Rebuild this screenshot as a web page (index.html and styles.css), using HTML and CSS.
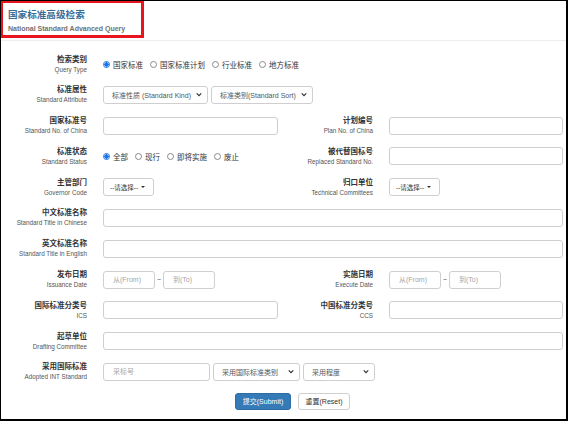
FILE: index.html
```html
<!DOCTYPE html>
<html lang="zh">
<head>
<meta charset="utf-8">
<title>国家标准高级检索</title>
<link rel="stylesheet" href="styles.css">
</head>
<body>
<div class="frame">
  <header class="head">
    <div class="title-box">
      <div class="title">国家标准高级检索</div>
      <div class="subtitle">National Standard Advanced Query</div>
    </div>
  </header>

  <form class="form">
    <div class="label"><b>检索类别</b><span>Query Type</span></div>
    <div class="field span3 radios">
      <label class="opt"><i class="radio on"></i>国家标准</label>
      <label class="opt"><i class="radio"></i>国家标准计划</label>
      <label class="opt"><i class="radio"></i>行业标准</label>
      <label class="opt"><i class="radio"></i>地方标准</label>
    </div>

    <div class="label"><b>标准属性</b><span>Standard Attribute</span></div>
    <div class="field span3 inline">
      <div class="select w105"><span>标准性质 (Standard Kind)</span><svg class="chev" viewBox="0 0 8 6"><path d="M1 1.5 L4 4.5 L7 1.5" fill="none" stroke="#333" stroke-width="1.6"/></svg></div>
      <div class="select w102"><span>标准类别(Standard Sort)</span><svg class="chev" viewBox="0 0 8 6"><path d="M1 1.5 L4 4.5 L7 1.5" fill="none" stroke="#333" stroke-width="1.6"/></svg></div>
    </div>

    <div class="label"><b>国家标准号</b><span>Standard No. of China</span></div>
    <div class="field"><div class="input"></div></div>
    <div class="label"><b>计划编号</b><span>Plan No. of China</span></div>
    <div class="field"><div class="input"></div></div>

    <div class="label"><b>标准状态</b><span>Standard Status</span></div>
    <div class="field radios">
      <label class="opt"><i class="radio on"></i>全部</label>
      <label class="opt"><i class="radio"></i>现行</label>
      <label class="opt"><i class="radio"></i>即将实施</label>
      <label class="opt"><i class="radio"></i>废止</label>
    </div>
    <div class="label"><b>被代替国标号</b><span>Replaced Standard No.</span></div>
    <div class="field"><div class="input"></div></div>

    <div class="label"><b>主管部门</b><span>Governor Code</span></div>
    <div class="field"><div class="dd">--请选择--<i class="caret"></i></div></div>
    <div class="label"><b>归口单位</b><span>Technical Committees</span></div>
    <div class="field"><div class="dd">--请选择--<i class="caret"></i></div></div>

    <div class="label"><b>中文标准名称</b><span>Standard Title in Chinese</span></div>
    <div class="field span3"><div class="input"></div></div>

    <div class="label"><b>英文标准名称</b><span>Standard Title in English</span></div>
    <div class="field span3"><div class="input"></div></div>

    <div class="label"><b>发布日期</b><span>Issuance Date</span></div>
    <div class="field dates">
      <div class="input date ph">从(From)</div><span class="tilde">~</span><div class="input date ph">到(To)</div>
    </div>
    <div class="label"><b>实施日期</b><span>Execute Date</span></div>
    <div class="field dates">
      <div class="input date ph">从(From)</div><span class="tilde">~</span><div class="input date ph">到(To)</div>
    </div>

    <div class="label"><b>国际标准分类号</b><span>ICS</span></div>
    <div class="field"><div class="input"></div></div>
    <div class="label"><b>中国标准分类号</b><span>CCS</span></div>
    <div class="field"><div class="input"></div></div>

    <div class="label"><b>起草单位</b><span>Drafting Committee</span></div>
    <div class="field span3"><div class="input"></div></div>

    <div class="label"><b>采用国际标准</b><span>Adopted INT Standard</span></div>
    <div class="field span3 inline">
      <div class="input w107 ph">采标号</div>
      <div class="select w87"><span>采用国际标准类别</span><svg class="chev" viewBox="0 0 8 6"><path d="M1 1.5 L4 4.5 L7 1.5" fill="none" stroke="#333" stroke-width="1.6"/></svg></div>
      <div class="select w72"><span>采用程度</span><svg class="chev" viewBox="0 0 8 6"><path d="M1 1.5 L4 4.5 L7 1.5" fill="none" stroke="#333" stroke-width="1.6"/></svg></div>
    </div>
  </form>

  <div class="actions">
    <button type="button" class="btn primary">提交(Submit)</button>
    <button type="button" class="btn">重置(Reset)</button>
  </div>
</div>
</body>
</html>
```

FILE: styles.css
```css
* { box-sizing: border-box; }
html, body { margin: 0; padding: 0; background: #fff; }
body {
  font-family: "Liberation Sans", "Noto Sans CJK SC", sans-serif;
  color: #333;
}
.frame {
  width: 568px;
  height: 421px;
  border-top: 1px solid #000;
  border-left: 1px solid #000;
  border-right: 2px solid #000;
  border-bottom: 2px solid #000;
  overflow: hidden;
}
.head {
  height: 41px;
  border-bottom: 1px solid #eeeeee;
  margin: -1px 0 0 -1px;
}
.title-box {
  width: 144px;
  height: 38px;
  border: 3px solid #e8151f;
  padding: 5px 0 0 5px;
}
.title {
  font-size: 9.6px;
  line-height: 13px;
  font-weight: bold;
  color: #3b6e97;
}
.subtitle {
  margin-top: 3px;
  font-size: 7px;
  line-height: 9px;
  font-weight: bold;
  color: #707070;
}
.form {
  display: grid;
  grid-template-columns: 85px 175px 79px 174px;
  grid-auto-rows: 18px;
  column-gap: 16px;
  row-gap: 12.8px;
  padding: 14px 0 0 1px;
  margin: 0;
}
.label {
  display: flex;
  flex-direction: column;
  align-items: flex-end;
  justify-content: center;
  text-align: right;
  white-space: nowrap;
  height: 18px;
  overflow: visible;
}
.label b {
  font-size: 7.5px;
  line-height: 11px;
  font-weight: bold;
  color: #333;
}
.label span {
  font-size: 6.3px;
  line-height: 10px;
  color: #555;
}
.field { display: flex; align-items: center; height: 18px; }
.span3 { grid-column: 2 / 5; }
.inline { gap: 3px; }
.dates { gap: 2px; }
.input {
  width: 100%;
  height: 18px;
  border: 1px solid #cfcfcf;
  border-radius: 3px;
  background: #fff;
  font-size: 7px;
  line-height: 16px;
  padding-left: 9px;
}
.ph { color: #a6a6a6; }
.date { width: 52px; flex: none; }
.tilde { font-size: 7px; color: #555; width: 4px; text-align: center; }
.w107 { width: 107px; flex: none; }
.radios { gap: 7px; }
.opt {
  display: flex;
  align-items: center;
  gap: 3px;
  font-size: 7.5px;
  color: #333;
  white-space: nowrap;
}
.radio {
  display: block;
  width: 7px;
  height: 7px;
  border-radius: 50%;
  border: 1px solid #8a8a8a;
  background: #fff;
}
.radio.on {
  border-color: #1a73e8;
  background: radial-gradient(circle, #1a73e8 0 2px, #fff 2.3px);
}
.select {
  display: flex;
  align-items: center;
  justify-content: space-between;
  height: 18px;
  border: 1px solid #cfcfcf;
  border-radius: 3px;
  background: #fff;
  padding: 0 5px 0 8px;
  font-size: 7px;
  color: #555;
  white-space: nowrap;
  flex: none;
}
.w105 { width: 105px; }
.w102 { width: 102px; }
.w87 { width: 87px; }
.w72 { width: 72px; }
.chev { width: 6px; height: 5px; }
.dd {
  display: flex;
  align-items: center;
  gap: 3px;
  width: 51px;
  height: 18px;
  border: 1px solid #cfcfcf;
  border-radius: 3px;
  padding-left: 6px;
  font-size: 6.5px;
  color: #333;
  white-space: nowrap;
}
.caret {
  display: block;
  width: 0;
  height: 0;
  border-left: 2px solid transparent;
  border-right: 2px solid transparent;
  border-top: 2.5px solid #333;
}
.actions {
  display: flex;
  gap: 7px;
  padding: 12px 0 0 234px;
}
.btn {
  height: 17px;
  padding: 0;
  width: 52px;
  border: 1px solid #cfcfcf;
  border-radius: 3px;
  background: #fff;
  color: #333;
  font-family: "Liberation Sans", "Noto Sans CJK SC", sans-serif;
  font-size: 7px;
}
.btn.primary {
  width: 56px;
  background: #337ab7;
  border-color: #2e6da4;
  color: #fff;
}
```
